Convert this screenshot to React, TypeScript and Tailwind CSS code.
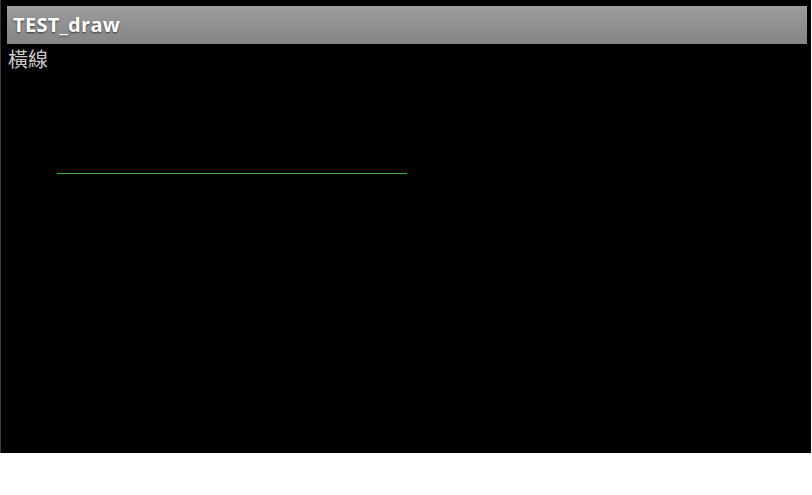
import React from "react";

export default function App() {
  return (
    <div className="w-[812px] h-[495px] bg-white">
      <div className="w-[811px] h-[453px] bg-black border-l border-[#3a3a3a] pl-[6px] pt-[6px] flex flex-col" style={{ fontFamily: '"Open Sans", "Noto Sans CJK TC", sans-serif' }}>
        <div className="w-[800px] h-[38px] bg-gradient-to-b from-[#9c9c9c] to-[#858585] flex items-center pl-[6px]">
          <span className="text-white font-bold text-[20px] leading-none tracking-[0.3px] [text-shadow:0_1px_2px_rgba(0,0,0,0.6)]" style={{ fontFamily: '"Open Sans", sans-serif' }}>TEST_draw</span>
        </div>
        <div className="text-[#c8c8c8] text-[20px] leading-[30px] pl-[1px]" style={{ fontFamily: '"Noto Sans CJK TC", sans-serif' }}>橫線</div>
        <div className="ml-[50px] mt-[99px] w-[350px] h-px bg-[#3cb43c]" />
      </div>
    </div>
  );
}
